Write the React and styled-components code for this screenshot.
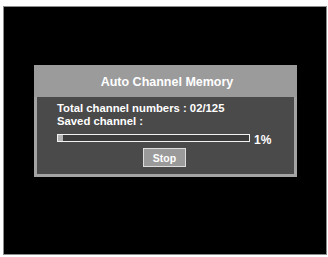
import React from 'react';
import styled, { createGlobalStyle } from 'styled-components';

const GlobalStyle = createGlobalStyle`
    html, body {
        margin: 0;
        padding: 0;
        background: #ffffff;
    }
    body {
        font-family: "Liberation Sans", Arial, sans-serif;
    }
`;

const Screen = styled.div`
    box-sizing: border-box;
    margin: 6px 0 0 3px;
    width: 324px;
    height: 249px;
    background: #000000;
    border: 1px solid #8c8c8c;
    padding: 58px 0 0 30px;
`;

const Dialog = styled.div`
    width: 263px;
`;

const TitleBar = styled.div`
    height: 32px;
    background: #9b9b9b;
    color: #ffffff;
    font-weight: bold;
    font-size: 12.5px;
    display: flex;
    align-items: center;
    justify-content: center;
    padding: 1px 0 0 3px;
    box-sizing: border-box;
`;

const Body = styled.div`
    background: #4a4a4a;
    border: 3px solid #a3a3a3;
    border-top: none;
    padding: 5px 20px 7px 20px;
    display: flex;
    flex-direction: column;
`;

const InfoLine = styled.div`
    color: #ffffff;
    font-weight: bold;
    font-size: 11.3px;
    line-height: 12.5px;
    white-space: nowrap;
`;

const ProgressRow = styled.div`
    display: flex;
    align-items: flex-start;
    gap: 4px;
    margin-top: 7px;
`;

const Track = styled.div`
    box-sizing: border-box;
    width: 193px;
    height: 8px;
    border: 1.5px solid #f2f2f2;
    background: #3c3c3c;
    display: flex;
`;

const Fill = styled.div`
    background: #b4b4b4;
    height: 100%;
`;

const Percent = styled.span`
    color: #ffffff;
    font-weight: bold;
    font-size: 12px;
    line-height: 12px;
`;

const StopButton = styled.button`
    align-self: center;
    margin-top: 2px;
    margin-left: -2px;
    width: 43px;
    height: 19px;
    box-sizing: border-box;
    background: #9a9a9a;
    border: 1.5px solid #dcdcdc;
    color: #ffffff;
    font-family: "Liberation Sans", Arial, sans-serif;
    font-weight: bold;
    font-size: 10.5px;
    padding: 0;
`;

export default function App() {
    const progress = 1;
    return (
        <>
            <GlobalStyle />
            <Screen>
                <Dialog>
                    <TitleBar>Auto Channel Memory</TitleBar>
                    <Body>
                        <InfoLine>Total channel numbers : 02/125</InfoLine>
                        <InfoLine>Saved channel :</InfoLine>
                        <ProgressRow>
                            <Track>
                                <Fill style={{ width: `${Math.max(progress * 2.5, 2.5)}%` }} />
                            </Track>
                            <Percent>{progress}%</Percent>
                        </ProgressRow>
                        <StopButton>Stop</StopButton>
                    </Body>
                </Dialog>
            </Screen>
        </>
    );
}
